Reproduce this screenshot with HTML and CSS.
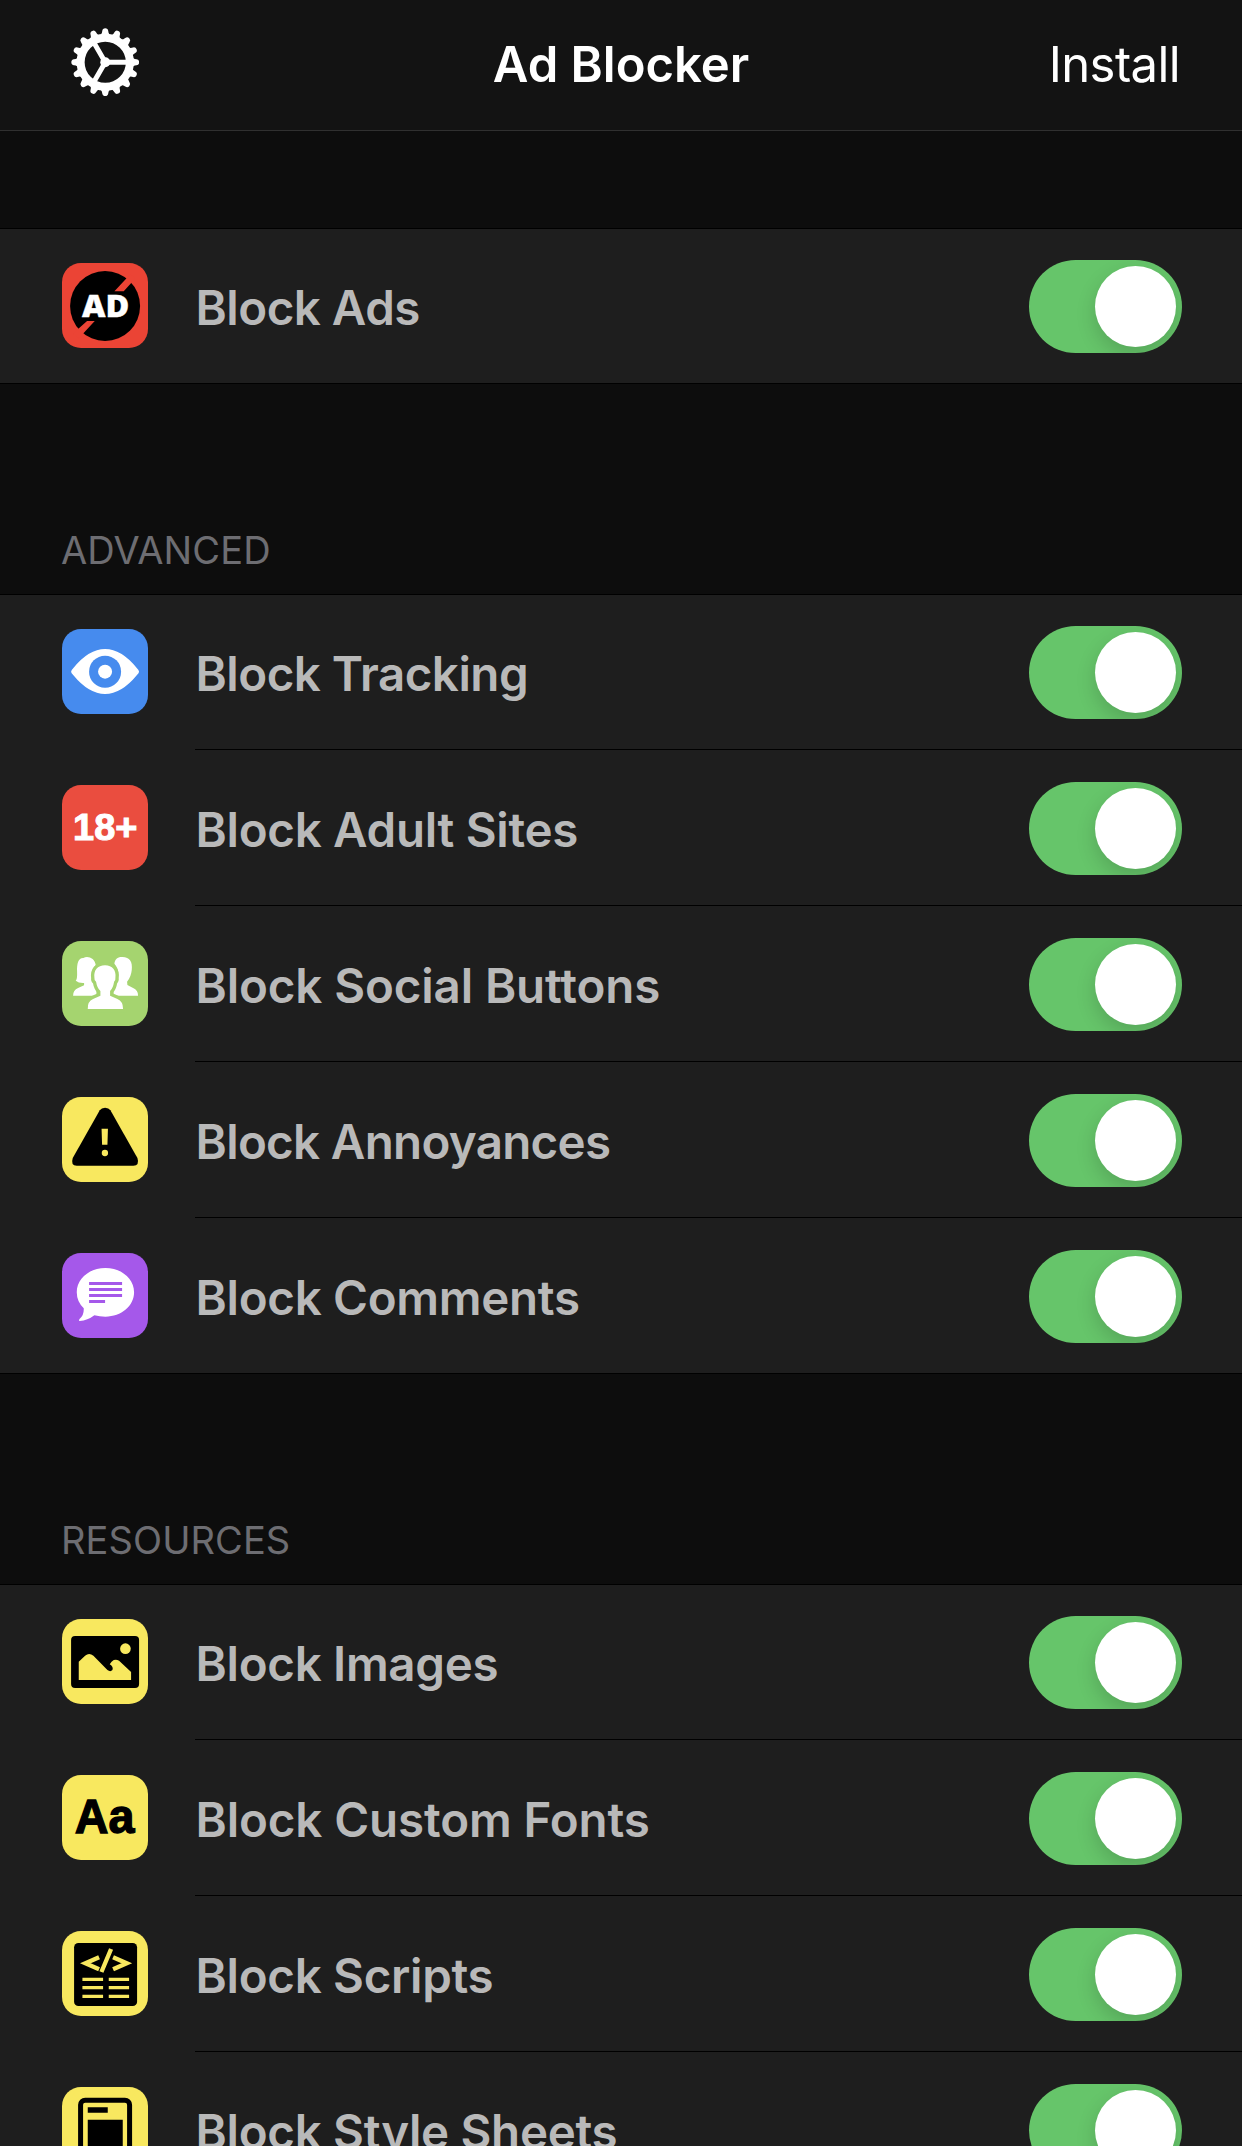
FILE: index.html
```html
<!DOCTYPE html>
<html lang="en">
<head>
<meta charset="utf-8">
<title>Ad Blocker</title>
<link rel="stylesheet" href="styles.css">
</head>
<body>
<header class="nav">
  <svg class="gear" viewBox="-103 -103 206 206" aria-label="Settings">
    <defs><path id="tooth" d="M-19-79Q-10-83-9-94Q-8-102 0-102Q8-102 9-94Q10-83 19-79Z"/></defs>
    <g fill="#fff">
      <use href="#tooth"/><use href="#tooth" transform="rotate(22.5)"/><use href="#tooth" transform="rotate(45)"/><use href="#tooth" transform="rotate(67.5)"/>
      <use href="#tooth" transform="rotate(90)"/><use href="#tooth" transform="rotate(112.5)"/><use href="#tooth" transform="rotate(135)"/><use href="#tooth" transform="rotate(157.5)"/>
      <use href="#tooth" transform="rotate(180)"/><use href="#tooth" transform="rotate(202.5)"/><use href="#tooth" transform="rotate(225)"/><use href="#tooth" transform="rotate(247.5)"/>
      <use href="#tooth" transform="rotate(270)"/><use href="#tooth" transform="rotate(292.5)"/><use href="#tooth" transform="rotate(315)"/><use href="#tooth" transform="rotate(337.5)"/>
      <circle r="15"/>
    </g>
    <circle r="74" fill="none" stroke="#fff" stroke-width="24"/>
    <path d="M0 0H66M0 0L-33-57M0 0L-33 57" stroke="#fff" stroke-width="15"/>
  </svg>
  <h1 class="title">Ad Blocker</h1>
  <a class="install">Install</a>
</header>
<main>
  <section class="group">
    <div class="row">
      <svg class="icon red" viewBox="0 0 256 255"><circle cx="129" cy="129" r="105"/><path fill="#eb4435" d="M192 47L157 85H185L208 59L220 44L204 34ZM48 198L75 174H98L64 211L50 226L34 212Z"/><text class="ad" x="60" y="161" textLength="142" lengthAdjust="spacingAndGlyphs">AD</text></svg>
      <span class="label snug">Block Ads</span><span class="switch"></span>
    </div>
  </section>

  <h2 class="heading">ADVANCED</h2>
  <section class="group">
    <div class="row">
      <svg class="icon blue" viewBox="0 0 256 255"><path fill="#fff" d="M27 128Q27 124 34 117Q80 60 129 60Q178 60 224 117Q231 124 231 128Q231 132 224 139Q178 195 129 195Q80 195 34 139Q27 132 27 128Z"/><circle cx="129" cy="128" r="48" fill="#468bee"/><circle cx="129" cy="128" r="21" fill="#fff"/></svg>
      <span class="label snug">Block Tracking</span><span class="switch"></span>
    </div>
    <div class="row">
      <svg class="icon coral" viewBox="0 0 256 255"><text class="age" x="33" y="164" textLength="193" lengthAdjust="spacingAndGlyphs">18+</text></svg>
      <span class="label">Block Adult Sites</span><span class="switch"></span>
    </div>
    <div class="row">
      <svg class="icon green" viewBox="0 0 256 255">
        <g fill="#fff">
          <path d="M33 164Q33 147 48 141L66 133V126Q50 127 41 119Q46 113 45 92C44 67 49 50 64 51C76 43 99 51 101 73Q88 86 90 105Q93 118 97 125V133L103 141V164Z"/>
          <path d="M228 164Q228 147 213 141L196 132L195 122Q207 108 209 87C212 63 203 48 181 48C167 47 158 55 157 68Q171 84 168 103Q164 119 160 124V135L154 143V164Z"/>
        </g>
        <path fill="#fff" stroke="#a5d46f" stroke-width="20" paint-order="stroke" d="M77 204Q76 181 93 174L115 164V150Q105 141 102 122Q96 119 97 110C94 89 106 73 129 73C151 73 163 89 160 110Q161 119 156 122Q153 141 144 150V164L166 174Q183 181 183 204Z"/>
      </svg>
      <span class="label loose">Block Social Buttons</span><span class="switch"></span>
    </div>
    <div class="row">
      <svg class="icon yellow" viewBox="0 0 256 255"><path d="M113 40Q118 32 129 32Q140 32 145 40L226 183Q233 206 214 206H44Q25 206 32 183Z"/><path fill="#f8e85f" d="M118.500 95H137.500L136 143H120Z"/><circle cx="128.500" cy="168" r="9.500" fill="#f8e85f"/></svg>
      <span class="label tight">Block Annoyances</span><span class="switch"></span>
    </div>
    <div class="row">
      <svg class="icon purple" viewBox="0 0 256 255"><path fill="#fff" d="M130 45C178 45 216 77 216 118S178 191 130 191Q113 191 97 187Q76 203 53 204Q48 203 53 197Q66 187 65 166Q44 146 44 118C44 77 82 45 130 45Z"/><path stroke="#a558ea" stroke-width="9" d="M81 91.500H180M81 109.500H180M81 127.500H180M81 145.500H129"/></svg>
      <span class="label">Block Comments</span><span class="switch"></span>
    </div>
  </section>

  <h2 class="heading">RESOURCES</h2>
  <section class="group">
    <div class="row">
      <svg class="icon yellow" viewBox="0 0 256 255"><rect x="27" y="51" width="204" height="156" rx="12"/><g fill="#f8e85f"><circle cx="190" cy="89" r="16"/><path d="M50 128L69 110Q81 100 94 110L136 153Q145 160 151 153Q155 144 143 136Q148 127 155 123Q163 120 171 125L207 159V183H50Z"/></g></svg>
      <span class="label">Block Images</span><span class="switch"></span>
    </div>
    <div class="row">
      <svg class="icon yellow" viewBox="0 0 256 255"><text class="fonts" x="38" y="175" textLength="179" lengthAdjust="spacingAndGlyphs">Aa</text></svg>
      <span class="label loose">Block Custom Fonts</span><span class="switch"></span>
    </div>
    <div class="row">
      <svg class="icon yellow" viewBox="0 0 256 255"><rect x="36" y="36" width="189" height="189" rx="13"/><g fill="none" stroke="#f8e85f" stroke-width="13"><path d="M111 79L70 97L111 115M153 79L194 97L153 115M147 54L118 123"/><path stroke-width="10" d="M61 145H123M61 170H123M61 196H123M140 145H201M140 170H201M140 196H201"/></g></svg>
      <span class="label">Block Scripts</span><span class="switch"></span>
    </div>
    <div class="row">
      <svg class="icon yellow" viewBox="0 0 256 255"><rect x="55.500" y="39.500" width="147" height="230" rx="14" fill="none" stroke="#000" stroke-width="15"/><path d="M77 61H137V77H77ZM77 98H182V255H77Z"/></svg>
      <span class="label">Block Style Sheets</span><span class="switch"></span>
    </div>
  </section>
</main>
</body>
</html>
```
FILE: styles.css
```css
* { box-sizing: border-box; }
html, body { margin: 0; height: 2146px; overflow: hidden; background: #0d0d0d; }
body { font-family: Inter, "Liberation Sans", sans-serif; color: #b9b9b9; }

.nav {
  display: grid;
  grid-template-columns: 1fr auto 1fr;
  height: 131px;
  padding: 0 62px;
  background: #131313;
  border-bottom: 1px solid #303030;
  color: #fff;
}
.gear { width: 68.500px; height: 68.500px; margin: 27.700px 0 0 8.500px; }
.title, .install { margin: 35px 0 0; font-size: 49px; line-height: 60px; white-space: nowrap; }
.title { font-weight: 600; }
.install { font-weight: 400; justify-self: end; letter-spacing: -.6px; }

main { padding-top: 97px; }
.group { border-top: 1px solid #000; background: #1e1e1e; }
.row { display: flex; align-items: flex-start; height: 156px; padding: 0 60px 0 62px; }
.row:first-child { margin-top: -1px; }
.row:not(:last-child) {
  background: linear-gradient(#000, #000) 195px 100% / 100% 1px no-repeat;
}
.row:last-child { border-bottom: 1px solid #000; }

.icon { flex: none; width: 85.500px; height: 85px; margin-top: 35px; border-radius: 19px; }
.red { background: #eb4435; }
.blue { background: #468bee; }
.coral { background: #ea4d3f; }
.green { background: #a5d46f; }
.yellow { background: #f8e85f; }
.purple { background: #a558ea; }
.ad { font: 800 89px "Open Sans", sans-serif; fill: #fff; stroke: #fff; stroke-width: 1px; }
.age { font: 700 112px "Liberation Sans", sans-serif; fill: #fff; stroke: #fff; stroke-width: 3px; }
.fonts { font: 700 145px "Liberation Sans", sans-serif; fill: #000; stroke: #000; stroke-width: 4px; }

.label {
  flex: 1;
  margin: 50px 0 0 48px;
  font-size: 47.500px;
  line-height: 60px;
  font-weight: 600;
  letter-spacing: -.3px;
  white-space: nowrap;
}
.label.snug { letter-spacing: -.5px; }
.label.tight { letter-spacing: -.68px; }
.label.loose { letter-spacing: -.12px; }

.switch {
  flex: none;
  width: 153px;
  height: 93px;
  margin-top: 32px;
  padding: 6px 6px 6px 66px;
  border-radius: 47px;
  background: #66c56a;
  overflow: hidden;
}
.switch::before {
  content: "";
  display: block;
  width: 81px;
  height: 81px;
  border-radius: 50%;
  background: #fff;
  box-shadow: 0 8px 20px rgba(0, 0, 0, .16);
}

.heading {
  display: flex;
  align-items: flex-end;
  height: 210px;
  margin: 0;
  padding: 0 61px 21px;
  font-size: 38px;
  line-height: 46px;
  font-weight: 400;
  letter-spacing: .1px;
  color: #6d6d72;
}
```
